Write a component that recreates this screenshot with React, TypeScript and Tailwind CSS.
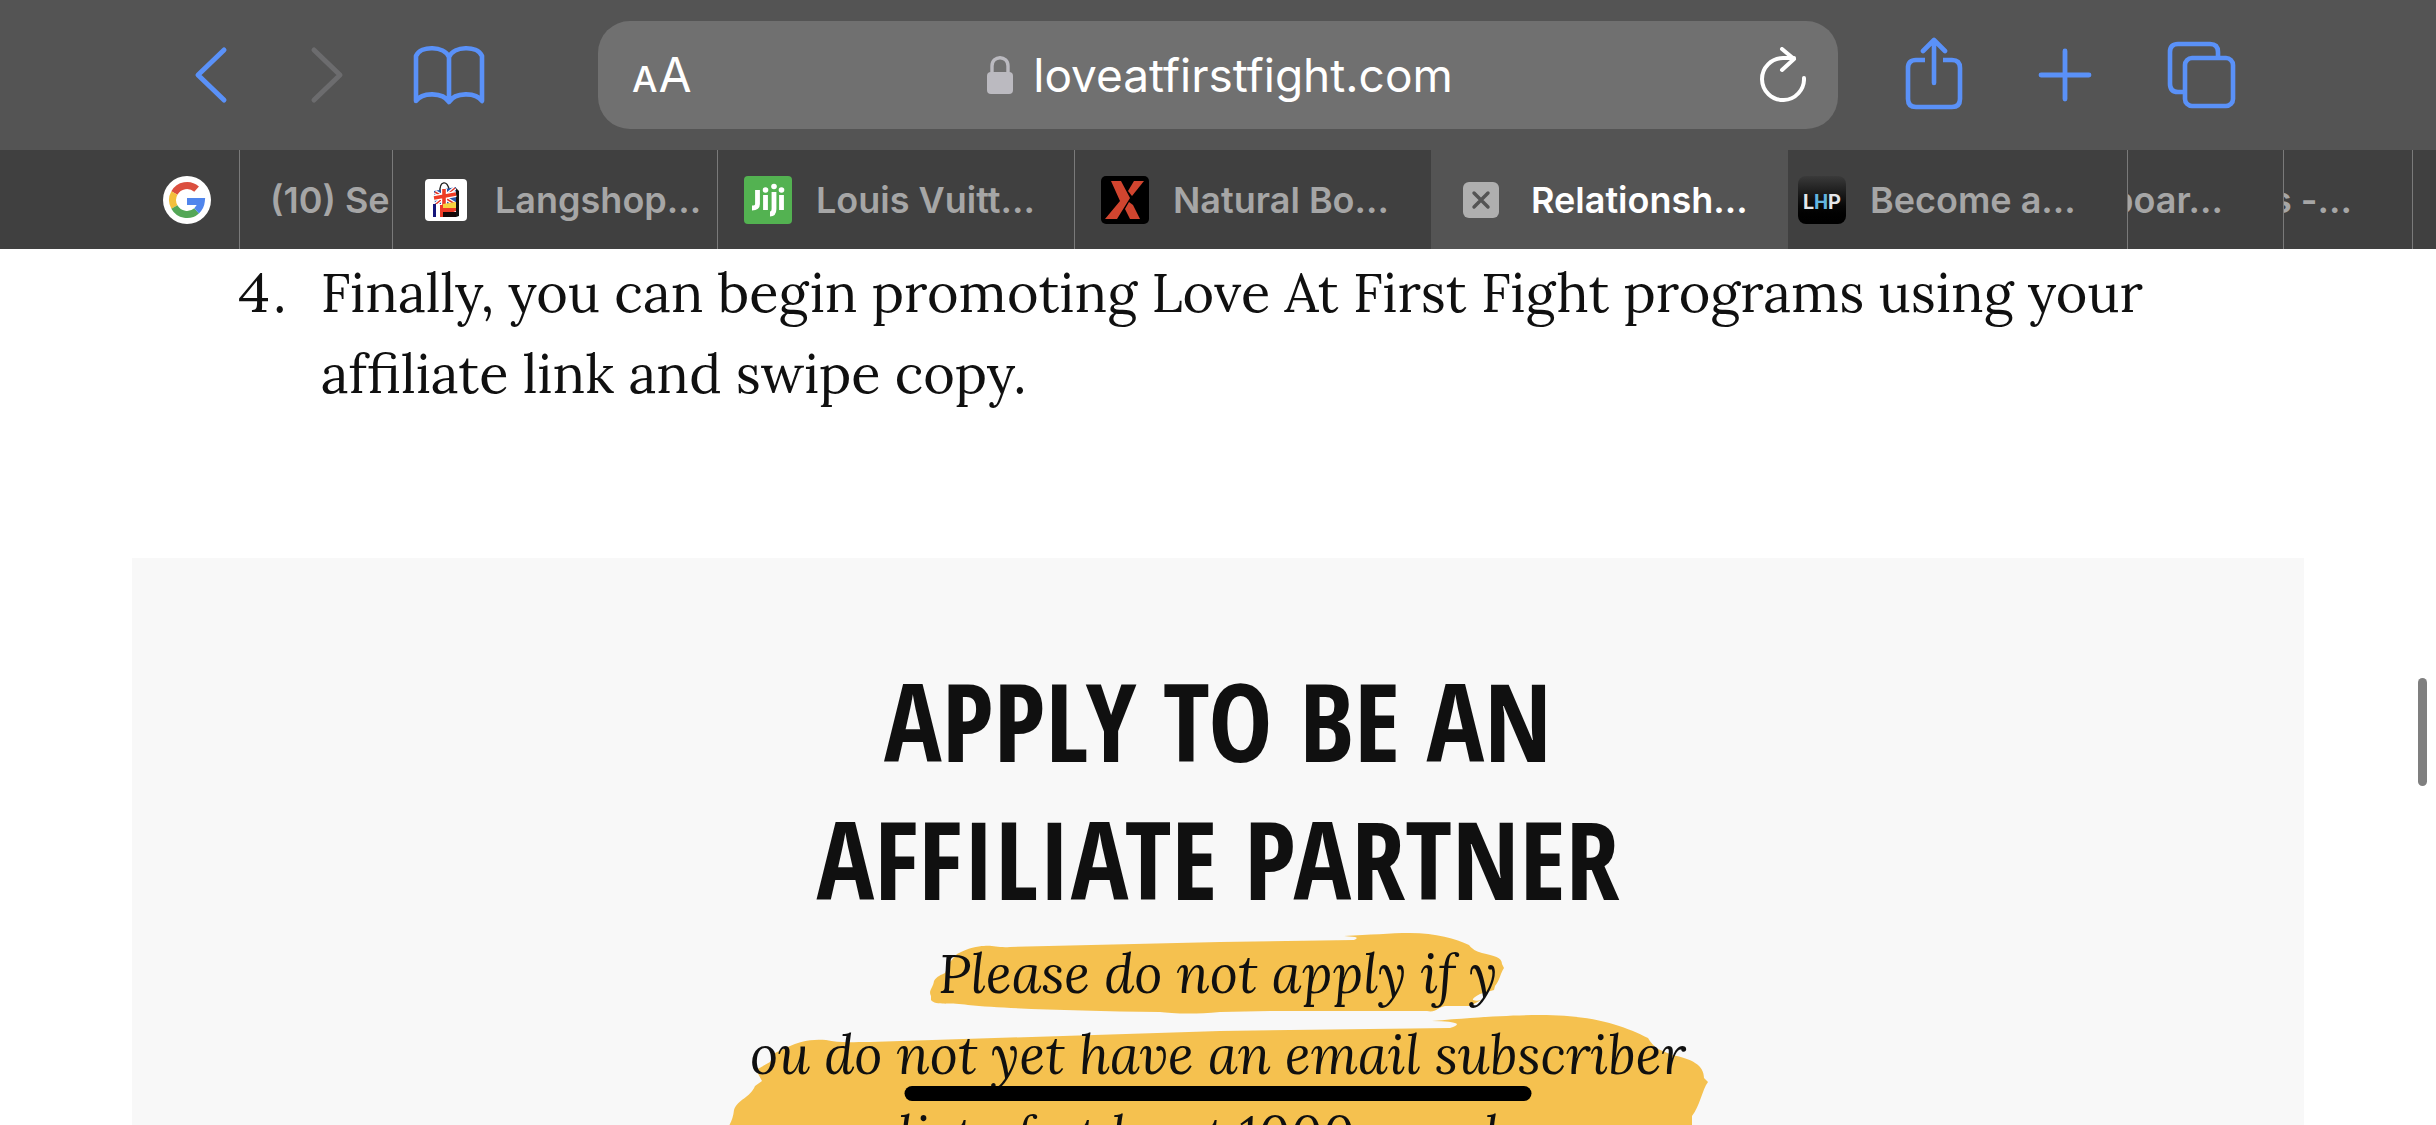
import type { ReactNode } from "react";

type Tab = {
  id: string;
  title: string;
  icon?: ReactNode;
  active?: boolean;
  className: string;
};

function GoogleIcon() {
  return (
    <svg viewBox="0 0 48 48" className="size-12 shrink-0" aria-hidden="true">
      <circle cx="24" cy="24" r="24" fill="#fff" />
      <g fill="none" strokeWidth="7">
        <path d="M33.6 13.2A14.4 14.4 0 0 0 11.4 17" stroke="#db4f3f" />
        <path d="M11.4 17A14.4 14.4 0 0 0 11.4 31" stroke="#f3bf3c" />
        <path d="M11.4 31A14.4 14.4 0 0 0 33.6 34.8" stroke="#54a757" />
        <path d="M33.6 34.8A14.4 14.4 0 0 0 38.3 25.5H24" stroke="#5085ec" />
      </g>
    </svg>
  );
}

function LangshopIcon() {
  return (
    <svg viewBox="0 0 42 42" className="size-10.5 shrink-0" aria-hidden="true">
      <rect width="42" height="42" rx="4" fill="#fff" />
      <path d="M15 14C14 1 23 1 24 11" fill="none" stroke="#222" strokeWidth="1.4" />
      <path d="M31 9L34 12V37L31 38Z" fill="#111" />
      <path d="M9 12L31 8V25H10Z" fill="#2a55a8" />
      <path d="M10 13L30 25M11 25L30 9" stroke="#fff" strokeWidth="4" />
      <path d="M10 13L30 25M11 25L30 9" stroke="#e2382a" strokeWidth="1.5" />
      <path d="M19 10V26M9 19L31 15" stroke="#fff" strokeWidth="6" />
      <path d="M19 10V26M9 19L31 15" stroke="#ee3b26" strokeWidth="3.6" />
      <path d="M8 25H11V38H8Z" fill="#15157a" />
      <path d="M11 25H15V38H11Z" fill="#fff" />
      <path d="M15 26H31V32L15 38Z" fill="#ee3b26" />
      <path d="M18 25L31 23V29H18Z" fill="#f7d33f" />
      <path d="M17 33H31V38H17Z" fill="#150808" />
      <path d="M15 28H18V38H15Z" fill="#ee3b26" />
    </svg>
  );
}

function JijiIcon() {
  return (
    <svg viewBox="0 0 48 48" className="size-12 shrink-0" aria-hidden="true">
      <rect width="48" height="48" rx="4" fill="#53b251" />
      <g fill="none" stroke="#fff" strokeWidth="4.8">
        <path d="M13.5 14V28Q13.5 32 8 32" />
        <path d="M21.5 19V34M37.5 19V34" />
        <path d="M30 16V33Q30 38 26 38" />
      </g>
      <circle cx="21.5" cy="14" r="2.8" fill="#fff" />
      <circle cx="30" cy="10.5" r="2.8" fill="#fff" />
      <circle cx="37.5" cy="14" r="2.8" fill="#fff" />
    </svg>
  );
}

function XIcon() {
  return (
    <svg viewBox="0 0 48 48" className="size-12 shrink-0" aria-hidden="true">
      <rect width="48" height="48" rx="5" fill="#000" />
      <path d="M10 5H20L29 22L16 43H4L19 25Z" fill="#d1452f" />
      <path d="M33 5H43L31 20L27 15Z" fill="#d1452f" />
      <path d="M28 26L32 29L39 43H29L24 33Z" fill="#d1452f" />
    </svg>
  );
}

function LhpIcon() {
  return (
    <span className="flex size-12 shrink-0 items-center justify-center rounded-lg bg-linear-to-b from-[#3a3a3a] to-black pt-1 font-[Roboto,sans-serif] text-xl font-bold text-gray-200">
      L<span className="text-[#62b5e0]">H</span>P
    </span>
  );
}

function CloseTabIcon() {
  return (
    <svg viewBox="0 0 36 36" className="size-9 shrink-0" aria-hidden="true">
      <rect width="36" height="36" rx="6" fill="#afafaf" />
      <path
        d="M11 11L25 25M25 11L11 25"
        stroke="#545454"
        strokeWidth="3.4"
        strokeLinecap="round"
      />
    </svg>
  );
}

const tabs: Tab[] = [
  { id: "google", title: "", icon: <GoogleIcon />, className: "justify-end pr-7" },
  { id: "search", title: "(10) Se", className: "pl-[30px]" },
  { id: "langshop", title: "Langshop...", icon: <LangshopIcon />, className: "gap-7 pl-8" },
  { id: "jiji", title: "Louis Vuitt...", icon: <JijiIcon />, className: "gap-6 pl-[26px]" },
  { id: "natural", title: "Natural Bo...", icon: <XIcon />, className: "gap-6 pl-[26px]" },
  {
    id: "relationship",
    title: "Relationsh...",
    icon: <CloseTabIcon />,
    active: true,
    className: "gap-8 pl-8",
  },
  { id: "lhp", title: "Become a...", icon: <LhpIcon />, className: "gap-6 pl-2.5" },
  { id: "board", title: "boar...", className: "justify-end pr-15" },
  { id: "news", title: "s -...", className: "justify-end pr-15" },
  { id: "more", title: "", className: "" },
];

function TabButton({ tab }: { tab: Tab }) {
  const tone = tab.active
    ? "bg-[#545454] text-white border-[#545454]"
    : "text-[#a6a6a6] border-[#7a7a7a] nth-[5]:border-transparent last:border-transparent";
  return (
    <button
      type="button"
      role="tab"
      aria-selected={!!tab.active}
      aria-label={tab.title || tab.id}
      className={`flex min-w-0 items-center overflow-hidden border-r text-4xl font-semibold whitespace-nowrap ${tone} ${tab.className}`}
    >
      {tab.icon}
      {tab.title && <span>{tab.title}</span>}
    </button>
  );
}

function Toolbar() {
  return (
    <div className="grid h-[150px] grid-cols-[598fr_1240fr_598fr] items-center">
      <div className="flex items-center justify-end pr-[113px] text-[#5a91f8]">
        <button type="button" aria-label="Back" className="mr-20">
          <svg viewBox="0 0 36 60" className="h-15 w-9" fill="none" stroke="currentColor" strokeWidth="5" strokeLinecap="round" strokeLinejoin="round">
            <path d="M31 5L5 30L31 55" />
          </svg>
        </button>
        <button type="button" aria-label="Forward" disabled className="mr-17 text-[#6c6c6e]">
          <svg viewBox="0 0 36 60" className="h-15 w-9" fill="none" stroke="currentColor" strokeWidth="5" strokeLinecap="round" strokeLinejoin="round">
            <path d="M5 5L31 30L5 55" />
          </svg>
        </button>
        <button type="button" aria-label="Bookmarks">
          <svg viewBox="0 0 72 60" className="h-15 w-18" fill="none" stroke="currentColor" strokeWidth="4.6" strokeLinecap="round" strokeLinejoin="round">
            <path d="M36 12C31 1 8 0 3 11V56C9 47 30 47 36 57C42 47 63 47 69 56V11C64 0 41 1 36 12V57" />
          </svg>
        </button>
      </div>

      <div className="flex h-27 items-center justify-between rounded-[32px] bg-[#707070] px-8 text-white">
        <button type="button" aria-label="Page settings" className="flex w-16 items-baseline gap-px pl-0.5">
          <span className="text-4xl font-medium">A</span>
          <span className="text-5xl">A</span>
        </button>
        <a href="#top" className="flex items-center gap-5 text-[46px]">
          <svg viewBox="0 0 26 38" className="h-[38px] w-[26px]" aria-hidden="true">
            <path d="M5 18V10C5 -1 21 -1 21 10V18" fill="none" stroke="#bbbac0" strokeWidth="3.4" />
            <rect y="16" width="26" height="22" rx="4" fill="#bbbac0" />
          </svg>
          loveatfirstfight.com
        </a>
        <button type="button" aria-label="Reload" className="flex w-15 justify-end">
          <svg viewBox="0 0 46 56" className="h-14 w-[46px]" fill="none" stroke="currentColor" strokeWidth="4" strokeLinecap="round" strokeLinejoin="round">
            <path d="M44 31A21 21 0 1 1 23 11H34" />
            <path d="M22 2L34 12L22 23" />
          </svg>
        </button>
      </div>

      <div className="flex items-center pl-[66px] text-[#5a91f8]">
        <button type="button" aria-label="Share" className="mr-[74px]">
          <svg viewBox="0 0 60 76" className="h-19 w-15" fill="none" stroke="currentColor" strokeWidth="4.6" strokeLinecap="round" strokeLinejoin="round">
            <path d="M21 23H12Q4 23 4 31V62Q4 70 12 70H48Q56 70 56 62V31Q56 23 48 23H39" strokeLinecap="butt" />
            <path d="M30 46V3M19 14L30 3L41 14" />
          </svg>
        </button>
        <button type="button" aria-label="New tab" className="mr-[75px]">
          <svg viewBox="0 0 54 54" className="size-[54px]" fill="none" stroke="currentColor" strokeWidth="4.8" strokeLinecap="round">
            <path d="M27 3V51M3 27H51" />
          </svg>
        </button>
        <button type="button" aria-label="Show tabs">
          <svg viewBox="0 0 70 68" className="h-17 w-[70px]" fill="none" stroke="currentColor" strokeWidth="4.6">
            <rect x="18" y="17" width="48" height="48" rx="7" />
            <path d="M18 51H11Q3 51 3 43V11Q3 3 11 3H43Q51 3 51 11V17" />
          </svg>
        </button>
      </div>
    </div>
  );
}

function Highlight() {
  return (
    <svg
      viewBox="718 928 1000 245"
      className="absolute top-0 left-1/2 w-[1000px] -translate-x-1/2"
      fill="#f5c14f"
      aria-hidden="true"
    >
      <path d="M957 954C968 948 978 946 984 946C993 945 998 948 1010 947L1220 942L1354 940Q1359 938 1355 937L1344 936C1370 935 1390 933 1410 933C1436 933 1456 939 1469 945Q1472 950 1482 953C1494 956 1502 957 1502 964L1504 968C1500 974 1500 980 1495 986L1494 990L1480 994Q1472 998 1473 1000Q1478 1002 1483 999L1470 1006H1445C1438 1007 1436 1013 1427 1011H1270L1220 1012C1190 1015 1170 1013 1160 1012C1080 1011 1010 1009 968 1005C952 1002 935 1006 931 1000V996C928 991 933 988 934 981C937 976 941 975 945 973L950 962Z" />
      <path d="M724 1135C730 1124 733 1120 734 1110C738 1099 750 1098 755 1086L762 1081L756 1070L770 1062L775 1053C800 1040 812 1039 826 1040C838 1043 850 1042 870 1042L1220 1031L1450 1028Q1457 1026 1457 1024Q1453 1021 1432 1021C1480 1017 1510 1015 1540 1015C1595 1015 1624 1026 1648 1038Q1652 1045 1658 1049L1672 1055C1692 1059 1704 1065 1704 1078L1708 1082C1702 1090 1700 1106 1692 1116V1175H718Z" />
    </svg>
  );
}

export default function App() {
  return (
    <div id="top" className="flex h-screen flex-col overflow-hidden bg-white font-[Inter,'Liberation_Sans',sans-serif]">
      <header className="shrink-0 bg-[#545454]">
        <Toolbar />
        <div
          role="tablist"
          className="grid h-[99px] grid-cols-[240fr_153fr_325fr_357fr_356fr_357fr_340fr_156fr_129fr_23fr] bg-[#404040]"
        >
          {tabs.map((tab) => (
            <TabButton key={tab.id} tab={tab} />
          ))}
        </div>
      </header>

      <main className="min-h-0 flex-1 overflow-hidden px-[132px] font-[Lora,'Liberation_Serif',serif] text-[#101010]">
        <ol start={4} className="flex flex-col px-26 pt-[3px] text-[54px] leading-[81px]">
          <li className="flex gap-8">
            <span className="tabular-nums">4.</span>
            <p>
              Finally, you can begin promoting Love At First Fight programs using your
              <br />
              affiliate link and swipe copy.
            </p>
          </li>
        </ol>

        <section className="mt-36 bg-[#f8f8f8] pt-[94px] text-center">
          <h2 className="font-['Open_Sans_Condensed','Liberation_Sans_Narrow',sans-serif] text-[108px] leading-[138px] font-bold">
            APPLY TO BE AN
            <br />
            AFFILIATE PARTNER
          </h2>
          <div className="relative">
            <Highlight />
            <p className="relative pt-[5px] text-[54px] leading-[81px] italic">
              Please do not apply if y
              <br />
              ou do not yet have an email subscriber
              <br />
              list of at least 1000 people.
            </p>
          </div>
        </section>
      </main>

      <div className="fixed top-[678px] right-[9px] h-27 w-[9px] rounded-full bg-[#7f7f7f]" />
      <div className="fixed bottom-6 left-1/2 h-[15px] w-[627px] -translate-x-1/2 rounded-full bg-black" />
    </div>
  );
}
